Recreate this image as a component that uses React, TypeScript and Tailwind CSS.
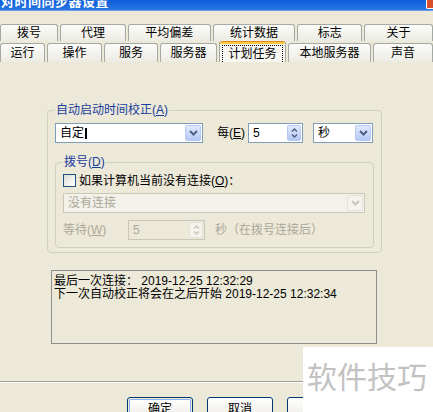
import React from 'react';

const font = "font-['Liberation_Sans','Noto_Sans_CJK_SC',sans-serif]";

const Chevron = ({ color = '#4d6185' }: { color?: string }) => (
  <svg width="9" height="6" viewBox="0 0 9 6">
    <path d="M1 1 L4.5 4.5 L8 1" fill="none" stroke={color} strokeWidth="2" />
  </svg>
);

const SpinArrows = ({ color = '#4d6185' }: { color?: string }) => (
  <svg width="7" height="12" viewBox="0 0 7 12">
    <path d="M1 4.5 L3.5 2 L6 4.5" fill="none" stroke={color} strokeWidth="1.5" />
    <path d="M1 7.5 L3.5 10 L6 7.5" fill="none" stroke={color} strokeWidth="1.5" />
  </svg>
);

const Combo = ({ text, width, disabled }: { text: React.ReactNode; width: string; disabled?: boolean }) => (
  <div
    className={`${width} h-[20px] flex items-stretch border p-[1px] ${
      disabled ? 'border-[#cbc8b8] bg-[#f2f1ea]' : 'border-[#7f9db9] bg-white'
    }`}
  >
    <div className={`flex-1 flex items-center pl-[3px] leading-none whitespace-nowrap ${disabled ? 'text-[#aca899]' : 'text-black'}`}>
      {text}
    </div>
    {disabled ? (
      <div className="w-[16px] flex items-center justify-center rounded-[2px] border border-[#e3e2da] bg-[#f4f3ee]">
        <Chevron color="#c9c7ba" />
      </div>
    ) : (
      <div className="w-[16px] flex items-center justify-center rounded-[2px] border border-[#b7c9f2] bg-gradient-to-b from-[#e1e9fd] to-[#b5c9f6]">
        <Chevron />
      </div>
    )}
  </div>
);

const Spin = ({ value, width, disabled }: { value: string; width: string; disabled?: boolean }) => (
  <div
    className={`${width} h-[20px] flex items-stretch border p-[1px] ${
      disabled ? 'border-[#c9c7ba] bg-[#ece9d8]' : 'border-[#7f9db9] bg-white'
    }`}
  >
    <div className={`flex-1 flex items-center pl-[3px] leading-none ${disabled ? 'text-[#aca899]' : 'text-black'}`}>
      {value}
    </div>
    {disabled ? (
      <div className="w-[14px] flex items-center justify-center rounded-[2px] border border-[#e3e2da] bg-[#f4f3ee]">
        <SpinArrows color="#c9c7ba" />
      </div>
    ) : (
      <div className="w-[14px] flex items-center justify-center rounded-[2px] border border-[#b7c9f2] bg-gradient-to-b from-[#e1e9fd] to-[#b5c9f6]">
        <SpinArrows />
      </div>
    )}
  </div>
);

const Tab = ({ label, width }: { label: string; width: string }) => (
  <div
    className={`${width} h-full flex items-center justify-center rounded-t-[3px] border border-b-0 border-[#a5a9a3] bg-gradient-to-b from-[#fbfbf9] to-[#ecebe3] leading-none whitespace-nowrap`}
  >
    {label}
  </div>
);

export default function App() {
  const row1: [string, string][] = [
    ['拨号', 'w-[59px]'],
    ['代理', 'w-[67px]'],
    ['平均偏差', 'w-[84px]'],
    ['统计数据', 'w-[84px]'],
    ['标志', 'w-[66px]'],
    ['关于', 'w-[70px]'],
  ];

  return (
    <div className={`relative w-[433px] h-[412px] overflow-hidden bg-[#ece9d8] text-[12px] text-black ${font}`}>
      {/* title bar */}
      <div className="h-[11px] flex justify-between overflow-hidden bg-gradient-to-b from-[#0b5bd8] to-[#2a74e4] border-b border-[#6d9ce8]">
        <div className="-mt-[5px] pl-[1px] text-[13px] leading-[14px] font-bold text-white tracking-[0.5px] whitespace-nowrap">
          对时间同步器设置
        </div>
        <div className="w-[7px] h-[9px] bg-[#d8502a] border-l border-b border-white rounded-bl-[2px]" />
      </div>

      {/* tabs */}
      <div className="mt-[13px] h-[17px] flex gap-[2px]">
        {row1.map(([l, w]) => (
          <Tab key={l} label={l} width={w} />
        ))}
      </div>
      <div className="h-[21px] flex items-end gap-[2px]">
        <div className="h-[19px] flex gap-[2px]">
          <Tab label="运行" width="w-[45px]" />
          <Tab label="操作" width="w-[55px]" />
          <Tab label="服务" width="w-[54px]" />
          <Tab label="服务器" width="w-[57px]" />
        </div>
        <div className="w-[77px] h-[21px] flex flex-col rounded-t-[3px] border-x border-[#a5a9a3] bg-[#f7f6f0] overflow-hidden">
          <div className="h-[1px] bg-[#e48a2a]" />
          <div className="h-[2px] bg-[#ffc83e]" />
          <div className="flex-1 mx-[2px] mt-[1px] flex items-center justify-center border border-dotted border-black border-b-0 leading-none whitespace-nowrap">
            计划任务
          </div>
        </div>
        <div className="h-[19px] flex gap-[2px]">
          <Tab label="本地服务器" width="w-[83px]" />
          <Tab label="声音" width="w-[60px]" />
        </div>
      </div>

      {/* panel */}
      <div className="h-[320px] pt-[42px] pl-[47px] border-b border-[#9d9c96]">
        <fieldset className="w-[335px] border border-[#d0d0bf] rounded-[4px] px-[7px] pb-[4px]">
          <legend className="px-[1px] leading-[13px] text-[#1a3c9c]">
            自动启动时间校正(<u>A</u>)
          </legend>
          <div className="mt-[6px] flex items-center">
            <Combo
              text={
                <>
                  自定<span className="ml-[1px] inline-block w-[2px] h-[11px] bg-black" />
                </>
              }
              width="w-[148px]"
            />
            <div className="ml-[14px] w-[28px] leading-none whitespace-nowrap">
              每(<u>E</u>)
            </div>
            <div className="ml-[3px]">
              <Spin value="5" width="w-[55px]" />
            </div>
            <div className="ml-[10px]">
              <Combo text="秒" width="w-[60px]" />
            </div>
          </div>

          <fieldset className="mt-[13px] w-[319px] border border-[#d0d0bf] rounded-[4px] px-[7px] pb-[7px]">
            <legend className="px-[1px] leading-[13px] text-[#1a3c9c]">
              拨号(<u>D</u>)
            </legend>
            <div className="mt-[5px] h-[13px] flex items-center">
              <div className="w-[13px] h-[13px] border border-[#1c5180] bg-gradient-to-br from-[#dcdcd7] to-white" />
              <div className="ml-[3px] leading-none whitespace-nowrap">
                如果计算机当前没有连接(<u>O</u>)：
              </div>
            </div>
            <div className="mt-[6px]">
              <Combo text="没有连接" width="w-[302px]" disabled />
            </div>
            <div className="mt-[7px] flex items-center text-[#aca899]">
              <div className="w-[65px] leading-none whitespace-nowrap">
                等待(<u>W</u>)
              </div>
              <Spin value="5" width="w-[77px]" disabled />
              <div className="ml-[10px] leading-none whitespace-nowrap">秒（在拨号连接后）</div>
            </div>
          </fieldset>
        </fieldset>

        <div className="mt-[17px] ml-[4px] w-[326px] h-[74px] border border-[#8e8e8a] px-[2px] pt-[4px] leading-[12.5px]">
          <div>最后一次连接： 2019-12-25 12:32:29</div>
          <div>下一次自动校正将会在之后开始 2019-12-25 12:32:34</div>
        </div>
      </div>

      {/* buttons */}
      <div className="pt-[14px] pl-[127px] flex gap-[14px] border-t border-white">
        <div className="w-[66px] h-[23px] rounded-[3px] border border-[#003c74] p-[1px]">
          <div className="h-full rounded-[2px] border border-[#8cb4f2] bg-gradient-to-b from-white to-[#eceae2] flex items-center justify-center leading-none">
            确定
          </div>
        </div>
        <div className="w-[66px] h-[23px] rounded-[3px] border border-[#003c74] bg-gradient-to-b from-white to-[#eceae2] flex items-center justify-center leading-none">
          取消
        </div>
        <div className="w-[66px] h-[23px] rounded-[3px] border border-[#003c74] bg-gradient-to-b from-white to-[#eceae2] flex items-center justify-center leading-none">
          应用
        </div>
      </div>

      {/* watermark */}
      <div className="absolute right-0 bottom-0 w-[130px] h-[65px] bg-white pt-[13px] pl-[4px]">
        <span className="text-[30px] leading-none text-[#c2c2c2] font-['Noto_Sans_CJK_SC',sans-serif] whitespace-nowrap">
          软件技巧
        </span>
      </div>
    </div>
  );
}
